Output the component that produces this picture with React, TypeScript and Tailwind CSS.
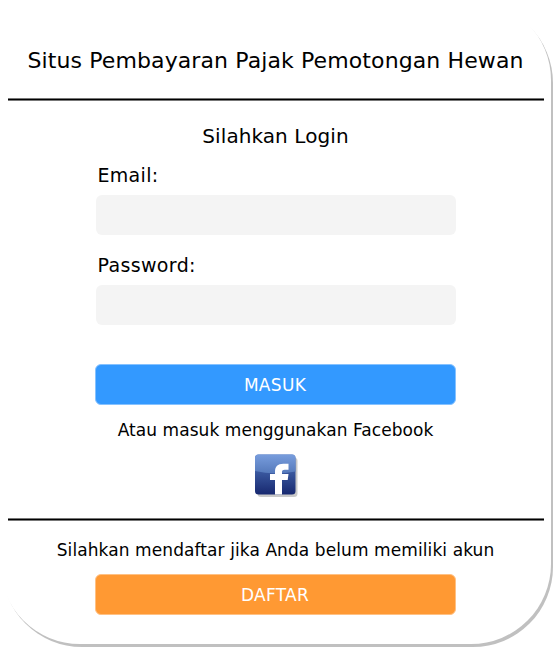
import React from "react";

function Rule() {
  return <div className="mx-2 h-[3px] w-[536px] shrink-0 border-y border-[#777] bg-black" />;
}

function Field({ label, type, labelClass }: { label: string; type: string; labelClass: string }) {
  return (
    <label className="block h-[90px] w-[360px]">
      <span className={`block h-[40px] whitespace-nowrap pl-[2px] text-[19px] leading-[40px] ${labelClass}`}>{label}</span>
      <input type={type} className="block h-[40px] w-[360px] rounded-[6px] bg-[#f4f4f4] px-3 outline-none" />
    </label>
  );
}

function FacebookIcon() {
  return (
    <svg width="44" height="44" viewBox="0 0 44 44" className="block" aria-label="Facebook">
      <defs>
        <linearGradient id="base" x1="0" y1="0" x2="0" y2="1">
          <stop offset="0" stopColor="#5778b8" />
          <stop offset="0.4" stopColor="#3c5ba2" />
          <stop offset="1" stopColor="#17286f" />
        </linearGradient>
        <linearGradient id="gloss" x1="0" y1="0" x2="0" y2="1">
          <stop offset="0" stopColor="#789ddd" />
          <stop offset="1" stopColor="#5579bb" />
        </linearGradient>
      </defs>
      <rect x="3.5" y="3.5" width="40" height="39.5" rx="3.5" fill="#c9c9c9" />
      <rect x="1" y="0.5" width="40.5" height="40" rx="3.5" fill="url(#base)" />
      <path d="M4.5.5H38A3.5 3.5 0 0 1 41.5 4V17.5Q20 21.500 1 17V4A3.500 3.500 0 0 1 4.500.5Z" fill="url(#gloss)" />
      <path d="M21 40.500V26h-5v-6h5v-2.300c0-5.200 2.700-8 8.200-8H34.500v6h-3.800c-1.800 0-2.700.7-2.700 2.300v2h6.500l-.8 6H28V40.500Z" fill="#fff" />
    </svg>
  );
}

export default function App() {
  return (
    <div className="h-[648px] w-[553px] overflow-hidden bg-white text-black [font-family:Verdana,'DejaVu_Sans',sans-serif]">
      <main className="flex h-[644px] w-[551px] flex-col rounded-[80px] bg-white pt-[41px] shadow-[2px_3px_0_#c0c0c0]">
        <h1 className="h-[57px] whitespace-nowrap text-center text-[22px] leading-[40px] tracking-[0.11px]">
          Situs Pembayaran Pajak Pemotongan Hewan
        </h1>
        <Rule />
        <div className="flex h-[417px] flex-col items-center pt-[15px]">
          <h2 className="h-[39px] whitespace-nowrap text-[20px] leading-[40px] tracking-[0.08px]">Silahkan Login</h2>
          <Field label="Email:" type="email" labelClass="tracking-[0.3px]" />
          <Field label="Password:" type="password" labelClass="tracking-[0.35px]" />
          <button className="mt-[29px] h-[41px] w-[361px] shrink-0 rounded-[6px] border border-[#86c2ff] bg-[#3399ff] pt-[2px] pr-px text-[17px] tracking-[0.3px] text-white">
            MASUK
          </button>
          <p className="mt-[5px] h-[40px] whitespace-nowrap text-[17px] leading-[40px] tracking-[0.06px]">
            Atau masuk menggunakan Facebook
          </p>
          <a className="mt-[4px] ml-[1px]">
            <FacebookIcon />
          </a>
        </div>
        <Rule />
        <div className="flex flex-col items-center pt-[9px]">
          <p className="h-[44px] whitespace-nowrap text-[17px] leading-[40px] tracking-[0.09px]">
            Silahkan mendaftar jika Anda belum memiliki akun
          </p>
          <button className="h-[41px] w-[361px] rounded-[6px] border border-[#ffc184] bg-[#ff9933] pt-[2px] pr-px text-[17px] tracking-[0.3px] text-white">
            DAFTAR
          </button>
        </div>
      </main>
    </div>
  );
}
